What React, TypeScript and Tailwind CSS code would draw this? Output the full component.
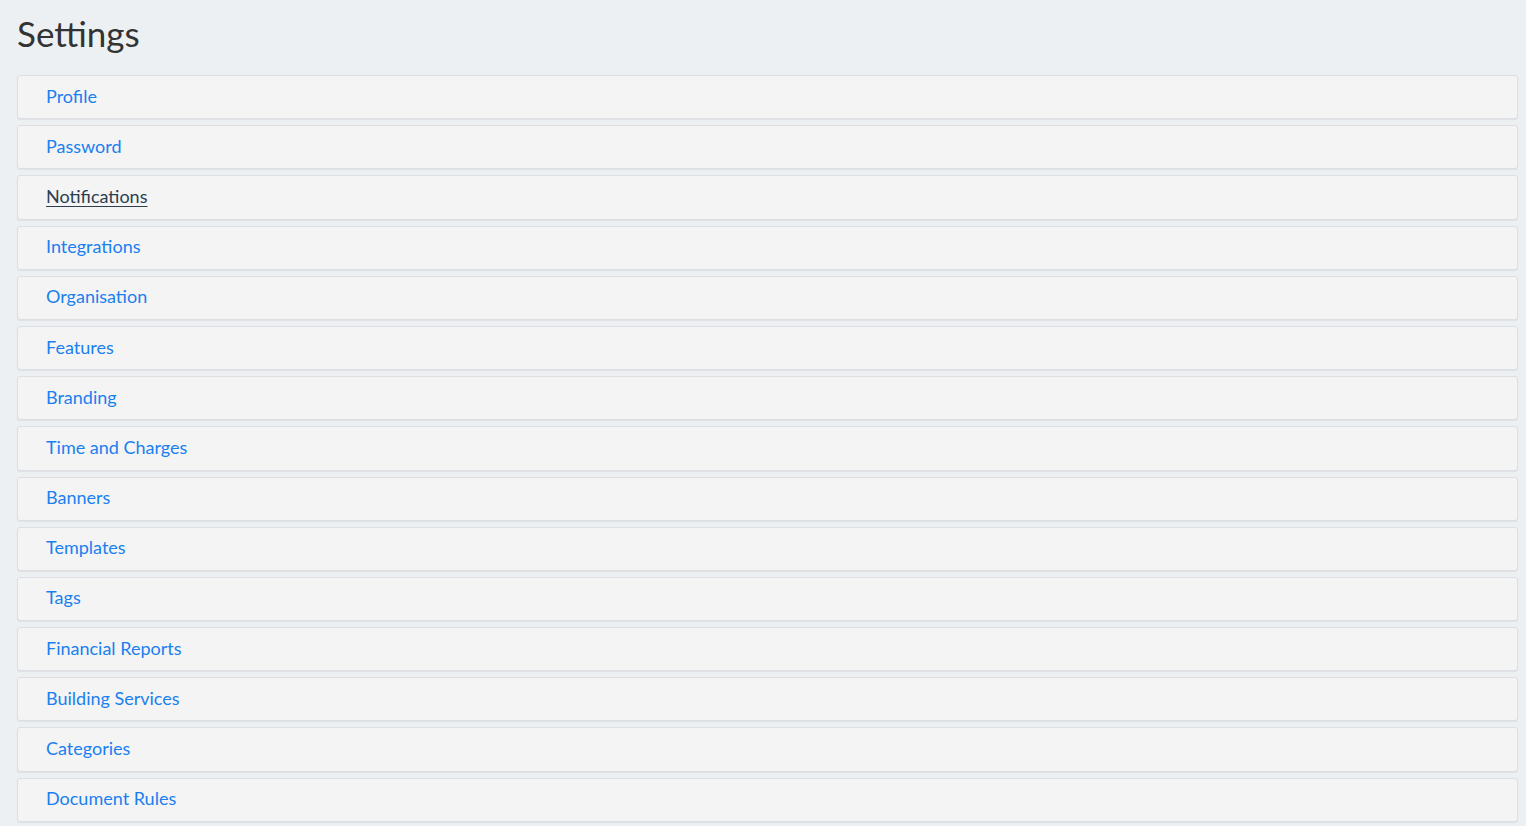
const items = [
  'Profile',
  'Password',
  'Notifications',
  'Integrations',
  'Organisation',
  'Features',
  'Branding',
  'Time and Charges',
  'Banners',
  'Templates',
  'Tags',
  'Financial Reports',
  'Building Services',
  'Categories',
  'Document Rules',
];

export default function App() {
  return (
    <div
      className="min-h-screen bg-[#edf0f3] pl-[17px] pr-[8px] pt-[11px]"
      style={{ fontFamily: 'Lato, "Open Sans", sans-serif' }}
    >
      <h1 className="text-[35px] leading-[44px] text-[#333] mb-[20px]">Settings</h1>
      <div className="flex flex-col gap-[6px]">
        {items.map((name) => (
          <div
            key={name}
            className="h-[44.2px] flex items-center rounded-[3px] border border-[#dcdee2] bg-[#f4f4f4] pl-[28px] pb-[2px] shadow-[0_1px_1px_rgba(0,0,0,0.06)]"
          >
            <a
              href="#"
              className={
                name === 'Notifications'
                  ? 'text-[18px] text-[#2c3e50] underline underline-offset-[3px]'
                  : 'text-[18px] text-[#1a7ff0]'
              }
            >
              {name}
            </a>
          </div>
        ))}
      </div>
    </div>
  );
}
